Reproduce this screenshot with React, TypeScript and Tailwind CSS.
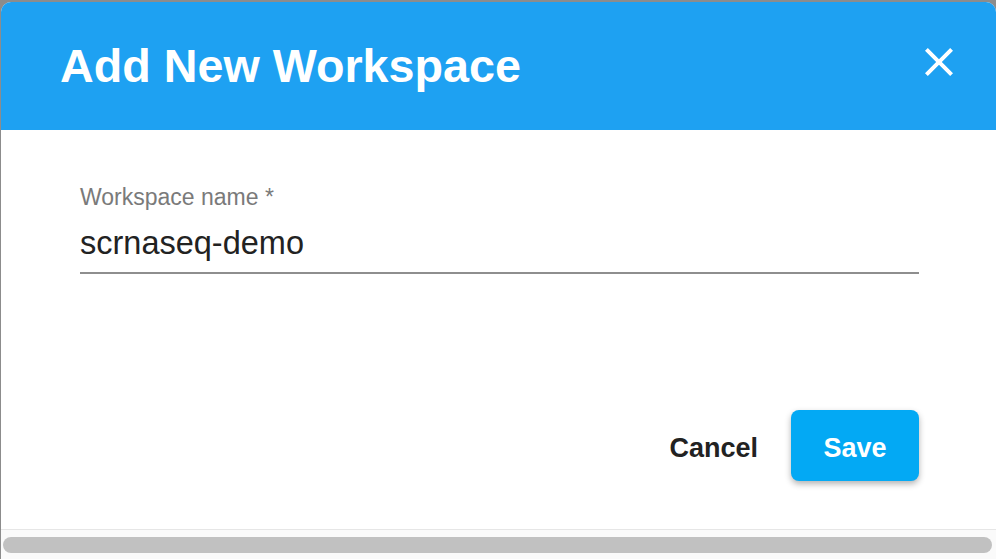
import { useState } from "react";

function CloseIcon() {
  return (
    <svg viewBox="0 0 24 24" className="h-12 w-12 fill-white">
      <path d="M19 6.41 17.59 5 12 10.59 6.41 5 5 6.41 10.59 12 5 17.59 6.41 19 12 13.41 17.59 19 19 17.59 13.41 12z" />
    </svg>
  );
}

export default function App() {
  const [name, setName] = useState("scrnaseq-demo");

  return (
    <div
      className="h-[559px] w-[996px] overflow-hidden bg-[#8c8c8c] pl-[1px] pt-[2px]"
      style={{ fontFamily: '"Liberation Sans", Arial, sans-serif' }}
    >
      <div className="flex h-[557px] w-[995px] flex-col overflow-hidden rounded-t-[10px] bg-white">
        {/* header */}
        <div className="flex h-[128px] shrink-0 items-center justify-between bg-[#1ea1f2] pl-[59px] pr-[33px]">
          <h2 className="mt-[1px] text-[46.7px] font-bold leading-none text-white">Add New Workspace</h2>
          <button className="-mt-[8px] flex h-12 w-12 items-center justify-center">
            <CloseIcon />
          </button>
        </div>

        {/* body */}
        <div className="flex flex-1 flex-col pl-[79px] pr-[77px]">
          <label className="mt-[53px] block text-[23px] leading-[28px] text-[#7a7a7a]">Workspace name *</label>
          <div className="mt-[12px] border-b-2 border-[#8e8e8e] pb-[9px]">
            <input
              value={name}
              onChange={(e) => setName(e.target.value)}
              className="block h-[40px] w-full bg-transparent text-[32.5px] leading-[40px] text-[#222] outline-none"
            />
          </div>

          <div className="mt-[136px] flex items-center justify-end gap-[33px]">
            <button className="pt-[6px] text-[27px] font-bold text-[#222]">Cancel</button>
            <button className="h-[71px] w-[128px] rounded-[8px] bg-[#03a9f4] pt-[6px] text-[27px] font-bold text-white shadow-[0_3px_6px_rgba(0,0,0,0.3)]">
              Save
            </button>
          </div>
        </div>

        {/* horizontal scrollbar */}
        <div className="h-[30px] shrink-0 border-t border-[#e6e6e6] bg-[#fafafa] px-[2px] pt-[7px]">
          <div className="h-[16px] w-[989px] rounded-full bg-[#c1c1c1]" />
        </div>
      </div>
    </div>
  );
}
